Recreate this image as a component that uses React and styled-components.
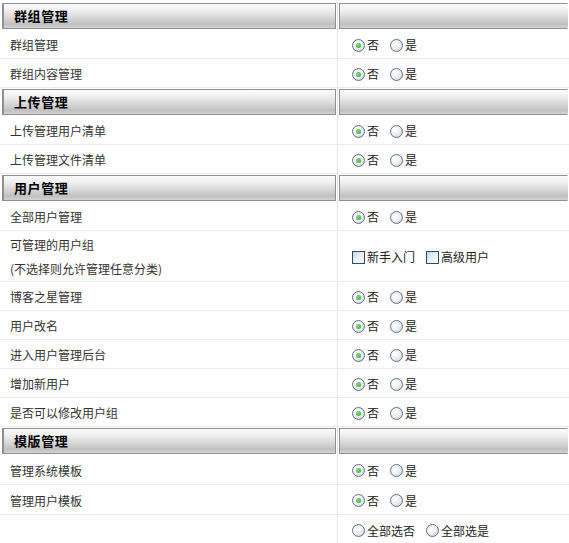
import React from "react";
import styled, { createGlobalStyle, css } from "styled-components";

const Global = createGlobalStyle`
  html, body { margin: 0; padding: 0; background: #fff; }
  body {
    font-family: "Noto Sans CJK SC", "Liberation Sans", sans-serif;
    font-size: 12px;
    color: #333;
  }
`;

const Table = styled.div`
  display: grid;
  grid-template-columns: 338px 1fr;
  width: 569px;
  padding-top: 2px;
`;

const HeadCell = styled.div`
  height: 28px;
  box-sizing: border-box;
  padding: 1px 1px 1px 2px;
  border-right: ${(p) => (p.$first ? "1px solid #e4e4e4" : "none")};
  ${(p) => !p.$first && css`padding-left: 1px;`}
`;

const HeadBox = styled.div`
  height: 100%;
  box-sizing: border-box;
  border: 1px solid #8f8f8f;
  border-left-width: ${(p) => (p.$first ? "2px" : "1px")};
  border-right-color: ${(p) => (p.$first ? "#8f8f8f" : "transparent")};
  background: linear-gradient(
    to bottom,
    #fbfbfb 0%,
    #f0f0f0 25%,
    #d9d9d9 55%,
    #c0c0c0 85%,
    #d4d4d4 100%
  );
  display: flex;
  align-items: center;
  padding-left: 10px;
  padding-bottom: 2px;
  font-size: 13px;
  font-weight: bold;
  color: #000;
  letter-spacing: 0.6px;
`;

const Cell = styled.div`
  box-sizing: border-box;
  min-height: ${(p) => (p.$tall ? "51px" : p.$roomy ? "30px" : "29px")};
  padding-top: 2px;
  border-bottom: 1px solid #ececec;
  display: flex;
  flex-direction: column;
  justify-content: center;
  line-height: 24px;
  ${(p) =>
    p.$label
      ? css`
          padding-left: 10px;
          border-right: 1px solid #e4e4e4;
        `
      : css`
          padding-left: 14px;
        `}
`;

const Options = styled.div`
  display: flex;
  align-items: center;
  gap: 11px;
  color: #222;
`;

const Option = styled.label`
  display: inline-flex;
  align-items: center;
  gap: 2px;
`;

const Radio = styled.span`
  width: 13px;
  height: 13px;
  box-sizing: border-box;
  border-radius: 50%;
  border: 1px solid #5f7184;
  background: radial-gradient(circle at 35% 35%, #ffffff 0%, #eef0f2 45%, #c9ced4 100%);
  display: inline-flex;
  align-items: center;
  justify-content: center;
  &::after {
    content: "";
    width: 5px;
    height: 5px;
    border-radius: 50%;
    background: radial-gradient(circle at 40% 40%, #7fe07a 0%, #2ea12b 100%);
    display: ${(p) => (p.$on ? "block" : "none")};
  }
`;

const Box = styled.span`
  width: 13px;
  height: 13px;
  box-sizing: border-box;
  border: 1px solid #1f4e7a;
  background: linear-gradient(135deg, #cfd5dc 0%, #eef1f4 55%, #ffffff 100%);
  display: inline-block;
`;

const Section = ({ title }) => (
  <>
    <HeadCell $first>
      <HeadBox $first>{title}</HeadBox>
    </HeadCell>
    <HeadCell>
      <HeadBox />
    </HeadCell>
  </>
);

const YesNo = () => (
  <Options>
    <Option>
      <Radio $on />否
    </Option>
    <Option>
      <Radio />是
    </Option>
  </Options>
);

const Row = ({ label, children, tall, roomy }) => (
  <>
    <Cell $label $tall={tall} $roomy={roomy}>
      {label}
    </Cell>
    <Cell $tall={tall} $roomy={roomy}>
      {children}
    </Cell>
  </>
);

const groups = [
  { title: "群组管理", rows: ["群组管理", "群组内容管理"] },
  { title: "上传管理", rows: ["上传管理用户清单", "上传管理文件清单"] },
];

export default function App() {
  return (
    <>
      <Global />
      <Table>
        {groups.map((g) => (
          <React.Fragment key={g.title}>
            <Section title={g.title} />
            {g.rows.map((r) => (
              <Row key={r} label={r}>
                <YesNo />
              </Row>
            ))}
          </React.Fragment>
        ))}

        <Section title="用户管理" />
        <Row label="全部用户管理">
          <YesNo />
        </Row>
        <Row
          tall
          label={
            <>
              <span>可管理的用户组</span>
              <span>(不选择则允许管理任意分类)</span>
            </>
          }
        >
          <Options>
            <Option>
              <Box />新手入门
            </Option>
            <Option>
              <Box />高级用户
            </Option>
          </Options>
        </Row>
        {["博客之星管理", "用户改名", "进入用户管理后台", "增加新用户", "是否可以修改用户组"].map((r) => (
          <Row key={r} label={r}>
            <YesNo />
          </Row>
        ))}

        <Section title="模版管理" />
        <Row roomy label="管理系统模板">
          <YesNo />
        </Row>
        <Row roomy label="管理用户模板">
          <YesNo />
        </Row>
        <Row roomy label="">
          <Options>
            <Option>
              <Radio />全部选否
            </Option>
            <Option>
              <Radio />全部选是
            </Option>
          </Options>
        </Row>
      </Table>
    </>
  );
}
